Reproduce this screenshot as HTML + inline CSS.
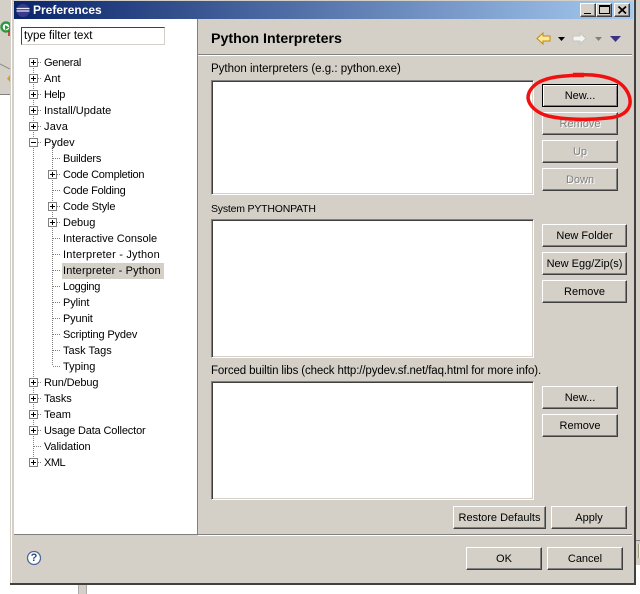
<!DOCTYPE html>
<html><head><meta charset="utf-8"><style>
html,body{margin:0;padding:0}
body{width:640px;height:594px;position:relative;overflow:hidden;background:#fff;font-family:"Liberation Sans",sans-serif;font-size:11px;color:#000}
div{position:absolute;box-sizing:border-box}
.t{white-space:nowrap;height:16px;line-height:16px}
.b{background:#d4d0c8;border:1px solid;border-color:#fff #404040 #404040 #fff;box-shadow:inset -1px -1px 0 #808080;text-align:center;line-height:22px;white-space:nowrap}
.d{color:#808080;text-shadow:1px 1px 0 #fff}
.l{background:#fff;border:1px solid;border-color:#808080 #fff #fff #808080;box-shadow:inset 1px 1px 0 #404040,inset -1px -1px 0 #d4d0c8}
.w{background:#d4d0c8;border:1px solid;border-color:#fff #404040 #404040 #fff;box-shadow:inset -1px -1px 0 #808080}
svg{position:absolute;left:0;top:0}
</style></head><body>
<!-- outside -->
<div style="left:0;top:0;width:10px;height:95px;background:#d4d0c8"></div>
<div style="left:0;top:94px;width:10px;height:1px;background:#808080"></div>
<div style="left:636px;top:0;width:4px;height:565px;background:#d4d0c8"></div>
<div style="left:636px;top:540px;width:4px;height:1px;background:#808080"></div>
<div style="left:638px;top:544px;width:2px;height:14px;background:#f4eec8;border-left:1px solid #a09c80"></div>
<div style="left:78px;top:585px;width:9px;height:9px;background:#d4d0c8;border-left:1px solid #aaa;border-right:1px solid #aaa"></div>
<svg width="10" height="95" viewBox="0 0 10 95">
<circle cx="6" cy="27" r="4.5" fill="#fff" stroke="#2c9a3c" stroke-width="2.4"/>
<path d="M5 25L9 27.5L5 30Z" fill="#2c9a3c"/>
<path d="M9 31V36" stroke="#c02020" stroke-width="1.5"/>
<path d="M0 64L10 69" stroke="#8c8c8c" fill="none"/>
<path d="M10 75L7 78.5L10 82Z" fill="#d8a020"/>
</svg>
<!-- dialog -->
<div style="left:10px;top:0;width:626px;height:585px;background:#d4d0c8;border-right:2px solid #404040;border-bottom:2px solid #404040"></div>
<div style="left:11px;top:0;width:1px;height:583px;background:#fff"></div>
<div style="left:14px;top:1px;width:619px;height:18px;background:linear-gradient(90deg,#0a246a,#a6caf0)"></div>
<div class="t" style="left:33px;top:2px;color:#fff;font-weight:bold;font-size:12px">Preferences</div>
<div class="w" style="left:580px;top:3px;width:16px;height:14px"></div>
<div class="w" style="left:596px;top:3px;width:16px;height:14px"></div>
<div class="w" style="left:614px;top:3px;width:16px;height:14px"></div>
<!-- tree pane -->
<div style="left:14px;top:19px;width:183px;height:515px;background:#fff"></div>
<div style="left:197px;top:19px;width:1px;height:515px;background:#808080"></div>
<div style="left:14px;top:534px;width:184px;height:1px;background:#808080"></div>
<div style="left:198px;top:535px;width:434px;height:1px;background:#fff"></div>
<div style="left:198px;top:534px;width:434px;height:1px;background:#808080"></div>
<div style="left:21px;top:27px;width:144px;height:18px;background:#fff;border:1px solid;border-color:#404040 #d4d0c8 #d4d0c8 #404040;padding-left:2px;line-height:16px;font-size:11.5px">type filter text</div>
<div style="left:62px;top:263px;width:102px;height:16px;background:#d4d0c8"></div>
<svg width="640" height="594" viewBox="0 0 640 594">
<g stroke="#808080" stroke-dasharray="1 1" fill="none" shape-rendering="crispEdges">
<path d="M33.5 62V462M52.5 142V366"/>
<path d="M38 62.5H42M38 78.5H42M38 94.5H42M38 110.5H42M38 126.5H42M38 142.5H42M38 382.5H42M38 398.5H42M38 414.5H42M38 430.5H42M34 446.5H42M38 462.5H42"/>
<path d="M53 158.5H61M57 174.5H61M53 190.5H61M57 206.5H61M57 222.5H61M53 238.5H61M53 254.5H61M53 270.5H61M53 286.5H61M53 302.5H61M53 318.5H61M53 334.5H61M53 350.5H61M53 366.5H61"/>
</g>
<g fill="#fff" stroke="#808080" shape-rendering="crispEdges">
<rect x="29.5" y="58.5" width="8" height="8"/><rect x="29.5" y="74.5" width="8" height="8"/><rect x="29.5" y="90.5" width="8" height="8"/><rect x="29.5" y="106.5" width="8" height="8"/><rect x="29.5" y="122.5" width="8" height="8"/><rect x="29.5" y="138.5" width="8" height="8"/><rect x="29.5" y="378.5" width="8" height="8"/><rect x="29.5" y="394.5" width="8" height="8"/><rect x="29.5" y="410.5" width="8" height="8"/><rect x="29.5" y="426.5" width="8" height="8"/><rect x="29.5" y="458.5" width="8" height="8"/>
<rect x="48.5" y="170.5" width="8" height="8"/><rect x="48.5" y="202.5" width="8" height="8"/><rect x="48.5" y="218.5" width="8" height="8"/>
</g>
<g stroke="#000" fill="none" shape-rendering="crispEdges">
<path d="M31 62.5H36M33.5 60V65M31 78.5H36M33.5 76V81M31 94.5H36M33.5 92V97M31 110.5H36M33.5 108V113M31 126.5H36M33.5 124V129M31 142.5H36M31 382.5H36M33.5 380V385M31 398.5H36M33.5 396V401M31 414.5H36M33.5 412V417M31 430.5H36M33.5 428V433M31 462.5H36M33.5 460V465"/>
<path d="M50 174.5H55M52.5 172V177M50 206.5H55M52.5 204V209M50 222.5H55M52.5 220V225"/>
<path d="M584 13.5H591" stroke="#000" stroke-width="1"/>
<path d="M599.5 5.5H609.5V13.5H599.5ZM599.5 6.5H609.5"/>
</g>
<path d="M618.5 6.5L626 13.5M626 6.5L618.5 13.5" stroke="#000" stroke-width="1.8" fill="none"/>
<!-- eclipse icon -->
<circle cx="23" cy="10.5" r="6.5" fill="#3a3a8c"/>
<path d="M16.5 8.5H29.5M16.5 11H29.5" stroke="#e8e8f8" stroke-width="1.2"/>
<!-- toolbar -->
<path d="M537 38.5L543 33V36H550V41H543V44Z" fill="#fde89a" stroke="#c08a10"/>
<path d="M558 37H565L561.5 41Z" fill="#000"/>
<path d="M586 38.5L580 33V36H573V41H580V44Z" fill="#f4f4f0" stroke="#c4c4c0"/>
<path d="M595 37H602L598.5 41Z" fill="#808080"/>
<path d="M610 36H621L615.5 42Z" fill="#3c3480"/>
<!-- help -->
<circle cx="34" cy="558" r="6.5" fill="#fff" stroke="#4a6a9c" stroke-width="1.3"/>
</svg>
<div class="t" style="left:30px;top:550px;width:8px;text-align:center;font-weight:bold;font-size:11px;color:#2a4a80">?</div>

<div class="t" style="left:44px;top:55px;letter-spacing:-.3px">General</div>
<div class="t" style="left:44px;top:71px">Ant</div>
<div class="t" style="left:44px;top:87px;letter-spacing:-.4px">Help</div>
<div class="t" style="left:44px;top:103px">Install/Update</div>
<div class="t" style="left:44px;top:119px;letter-spacing:.2px">Java</div>
<div class="t" style="left:44px;top:135px">Pydev</div>
<div class="t" style="left:63px;top:151px;letter-spacing:-.2px">Builders</div>
<div class="t" style="left:63px;top:167px;letter-spacing:-.25px">Code Completion</div>
<div class="t" style="left:63px;top:183px;letter-spacing:-.25px">Code Folding</div>
<div class="t" style="left:63px;top:199px;letter-spacing:-.15px">Code Style</div>
<div class="t" style="left:63px;top:215px">Debug</div>
<div class="t" style="left:63px;top:231px">Interactive Console</div>
<div class="t" style="left:63px;top:247px;letter-spacing:.2px">Interpreter - Jython</div>
<div class="t" style="left:63px;top:263px;letter-spacing:.15px">Interpreter - Python</div>
<div class="t" style="left:63px;top:279px;letter-spacing:-.3px">Logging</div>
<div class="t" style="left:63px;top:295px;letter-spacing:-.1px">Pylint</div>
<div class="t" style="left:63px;top:311px;letter-spacing:-.15px">Pyunit</div>
<div class="t" style="left:63px;top:327px;letter-spacing:-.15px">Scripting Pydev</div>
<div class="t" style="left:63px;top:343px">Task Tags</div>
<div class="t" style="left:63px;top:359px">Typing</div>
<div class="t" style="left:44px;top:375px;letter-spacing:-.15px">Run/Debug</div>
<div class="t" style="left:44px;top:391px;letter-spacing:-.1px">Tasks</div>
<div class="t" style="left:44px;top:407px">Team</div>
<div class="t" style="left:44px;top:423px;letter-spacing:-.15px">Usage Data Collector</div>
<div class="t" style="left:44px;top:439px;letter-spacing:-.1px">Validation</div>
<div class="t" style="left:44px;top:455px;letter-spacing:-.5px">XML</div>

<!-- right pane -->
<div class="t" style="left:211px;top:31px;font-weight:bold;font-size:14.2px">Python Interpreters</div>
<div style="left:198px;top:54px;width:434px;height:1px;background:#808080"></div>
<div style="left:198px;top:55px;width:434px;height:1px;background:#fff"></div>
<div class="t" style="left:211px;top:61px;font-size:11.5px">Python interpreters (e.g.: python.exe)</div>
<div class="l" style="left:211px;top:80px;width:323px;height:115px"></div>
<div class="t" style="left:211px;top:201px;font-size:10.5px;letter-spacing:-.2px">System PYTHONPATH</div>
<div class="l" style="left:211px;top:219px;width:323px;height:139px"></div>
<div class="t" style="left:211px;top:363px;font-size:11.5px;letter-spacing:-.12px">Forced builtin libs (check http://pydev.sf.net/faq.html for more info).</div>
<div class="l" style="left:211px;top:381px;width:323px;height:119px"></div>

<div class="b" style="left:542px;top:84px;width:76px;height:23px;border:1px solid #000;box-shadow:inset 1px 1px 0 #fff,inset -1px -1px 0 #808080">New...</div>
<div class="b d" style="left:542px;top:112px;width:76px;height:23px">Remove</div>
<div class="b d" style="left:542px;top:140px;width:76px;height:23px">Up</div>
<div class="b d" style="left:542px;top:168px;width:76px;height:23px">Down</div>
<div class="b" style="left:542px;top:224px;width:85px;height:23px">New Folder</div>
<div class="b" style="left:542px;top:252px;width:85px;height:23px">New Egg/Zip(s)</div>
<div class="b" style="left:542px;top:280px;width:85px;height:23px">Remove</div>
<div class="b" style="left:542px;top:386px;width:76px;height:23px">New...</div>
<div class="b" style="left:542px;top:414px;width:76px;height:23px">Remove</div>
<div class="b" style="left:453px;top:506px;width:93px;height:23px">Restore Defaults</div>
<div class="b" style="left:551px;top:506px;width:76px;height:23px">Apply</div>
<div class="b" style="left:466px;top:547px;width:76px;height:23px">OK</div>
<div class="b" style="left:547px;top:547px;width:76px;height:23px">Cancel</div>

<svg width="640" height="594" viewBox="0 0 640 594" style="pointer-events:none">
<path d="M578 75C592 74 608 76 618 82C626 87 631 96 630 104C628 113 620 117 608 118C590 120 565 120 548 116C537 113 529 106 528 98C528 90 535 83 544 80C555 76 566 76 578 75Z" fill="none" stroke="#f01010" stroke-width="3.5" stroke-linejoin="round"/>
<path d="M573 75H584" stroke="#f01010" stroke-width="4.5"/>
</svg>
</body></html>
